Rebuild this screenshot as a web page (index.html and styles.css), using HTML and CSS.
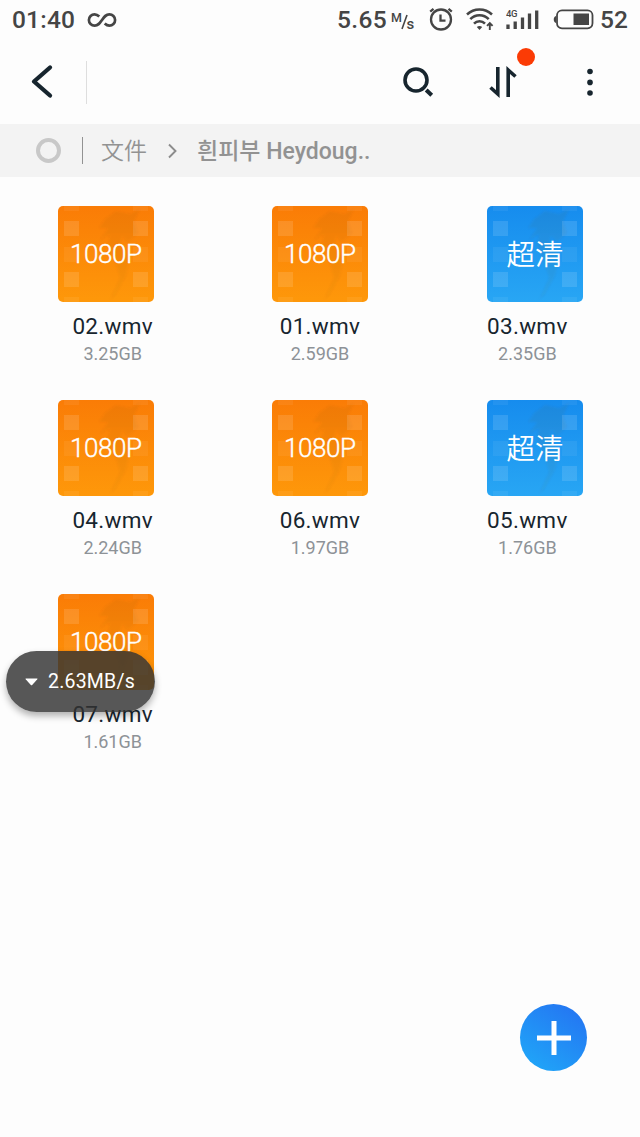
FILE: index.html
```html
<!DOCTYPE html>
<html lang="zh">
<head>
<meta charset="utf-8">
<title>文件</title>
<link rel="stylesheet" href="styles.css">
</head>
<body>
<svg class="defs" width="0" height="0" aria-hidden="true">
  <defs>
    <linearGradient id="orange" x1="0" y1="0" x2="0" y2="1"><stop offset="0" stop-color="#fa7c06"/><stop offset="1" stop-color="#fe980a"/></linearGradient>
    <linearGradient id="blue" x1="0" y1="0" x2="0" y2="1"><stop offset="0" stop-color="#168cee"/><stop offset="1" stop-color="#28a6f4"/></linearGradient>
    <linearGradient id="fade" x1="0" y1="0" x2="0" y2="1"><stop offset="0" stop-color="#70451c" stop-opacity=".07"/><stop offset="1" stop-color="#70451c" stop-opacity=".05"/></linearGradient>
    <filter id="soft"><feGaussianBlur stdDeviation="1"/></filter>
    <symbol id="film" viewBox="0 0 96 96">
      <path d="M41 22 47 13 58 5 72 8 82 3 76 16 80 27 70 36 64 30 62 38 72 50 68 70 58 88 52 94 62 72 56 52 50 40 52 28 42 34 50 22Z" fill="url(#fade)" filter="url(#soft)"/>
      <g fill="#fff">
        <path fill-opacity=".06" d="M6 0h15v5H6zM6 41h15v15H6zM6 91h15v5H6zM75 0h15v5H75zM75 41h15v15H75zM75 91h15v5H75z"/>
        <path fill-opacity=".12" d="M6 15h15v15H6zM6 66h15v15H6zM75 15h15v15H75zM75 66h15v15H75z"/>
      </g>
    </symbol>
    <symbol id="hd" viewBox="0 0 96 96">
      <rect width="96" height="96" rx="5" fill="url(#orange)"/>
      <use href="#film"/>
      <text class="hd-text" x="12" y="57" textLength="72">1080P</text>
    </symbol>
    <symbol id="sd" viewBox="0 0 96 96">
      <rect width="96" height="96" rx="5" fill="url(#blue)"/>
      <use href="#film"/>
      <text class="sd-text" x="48" y="59" text-anchor="middle">超清</text>
    </symbol>
  </defs>
</svg>

<header class="status">
  <span class="clock">01:40</span>
  <svg class="infinity" width="30" height="18" viewBox="0 0 30 18"><path d="M12.300 5.500C10.500 3.800 9.300 3.300 7.600 3.300a5.700 5.700 0 0 0 0 11.400c3.600 0 5-2.200 7.400-5.700s3.800-5.700 7.400-5.700a5.700 5.700 0 0 1 0 11.400c-1.700 0-2.900-.5-4.700-2.200" fill="none" stroke="#454545" stroke-width="2.700"/></svg>
  <span class="speed">5.65</span>
  <svg class="unit" width="26" height="32" viewBox="0 -4 26 32"><text x="0" y="14" class="unit-m">M</text><path d="M16 7 11 21" stroke="#454545" stroke-width="1.600"/><text x="15.500" y="21" class="unit-s">s</text></svg>
  <svg class="alarm" width="24" height="24" viewBox="0 0 24 24" fill="none" stroke="#454545" stroke-width="2.300"><circle cx="12" cy="11.500" r="10"/><path d="M11.500 6.500v6.200h5M1.200 3.700 4.500.9M22.800 3.700 19.500.9"/></svg>
  <svg class="wifi" width="28" height="24" viewBox="0 0 28 24" fill="none" stroke="#454545" stroke-width="2.500"><path d="M1 6.500a18 18 0 0 1 25 0M4.300 11.200a12.500 12.500 0 0 1 18.400 0M8 15.700a7.500 7.500 0 0 1 11 0"/><path d="m10.800 19 2.700 3 2.700-3c-1.600-1.200-3.800-1.200-5.400 0Z" fill="#454545" stroke="none"/><path d="M23.800 22v-6M21 17.900l2.800-2.800 2.800 2.800" stroke-width="1.900"/></svg>
  <svg class="signal" width="34" height="24" viewBox="0 0 34 24"><text x="0" y="8.500" class="net" textLength="11.500">4G</text><path d="M2 16.500V21M9.200 13.500V21M16.500 9.500V21M23.500 5.500V21M30.700 2.500V21" stroke="#454545" stroke-width="3.300"/></svg>
  <svg class="battery" width="42" height="22" viewBox="0 0 42 22"><rect x="4" y="1.300" width="35.500" height="18" rx="5" fill="none" stroke="#454545" stroke-width="1.800"/><path d="M3 7C0 7.500 0 13.500 3 14Z" fill="#454545"/><path d="M20.500 4.500H36V16H20.500z" fill="#454545"/></svg>
  <span class="percent">52</span>
</header>

<nav class="toolbar">
  <svg class="back" width="24" height="36" viewBox="0 0 24 36"><path d="M20 3.500 4 17.500l16 14" fill="none" stroke="#17252e" stroke-width="4.300" stroke-linecap="round" stroke-linejoin="round"/></svg>
  <span class="divider"></span>
  <svg class="search" width="32" height="32" viewBox="0 0 32 32" fill="none" stroke="#17252e" stroke-width="3.600"><circle cx="14" cy="14" r="11"/><path d="m24.200 24 5.500 5.300" stroke-width="4"/></svg>
  <span class="sort">
    <svg width="28" height="32" viewBox="0 0 28 32" fill="none" stroke="#17252e" stroke-width="3.600"><path d="M8.800 1v27L1.500 21.500M19.200 31V4l7.300 6.500"/></svg>
    <i class="dot"></i>
  </span>
  <svg class="more" width="6" height="28" viewBox="0 0 6 28" fill="#17252e"><circle cx="3" cy="3.500" r="2.800"/><circle cx="3" cy="14.400" r="2.800"/><circle cx="3" cy="25" r="2.800"/></svg>
</nav>

<div class="crumbs">
  <span class="ring"></span>
  <span class="bar"></span>
  <span class="root">文件</span>
  <svg class="chev" width="10" height="16" viewBox="0 0 10 16"><path d="m1 1.500 6.500 6.500L1 14.500" fill="none" stroke="#8c8c8c" stroke-width="1.900"/></svg>
  <span class="folder">흰피부 Heydoug..</span>
</div>

<main class="files">
  <article class="file left"><svg class="thumb"><use href="#hd"/></svg><span class="name">02.wmv</span><span class="size">3.25GB</span></article>
  <article class="file"><svg class="thumb"><use href="#hd"/></svg><span class="name">01.wmv</span><span class="size">2.59GB</span></article>
  <article class="file right"><svg class="thumb"><use href="#sd"/></svg><span class="name">03.wmv</span><span class="size">2.35GB</span></article>
  <article class="file left"><svg class="thumb"><use href="#hd"/></svg><span class="name">04.wmv</span><span class="size">2.24GB</span></article>
  <article class="file"><svg class="thumb"><use href="#hd"/></svg><span class="name">06.wmv</span><span class="size">1.97GB</span></article>
  <article class="file right"><svg class="thumb"><use href="#sd"/></svg><span class="name">05.wmv</span><span class="size">1.76GB</span></article>
  <article class="file left"><svg class="thumb"><use href="#hd"/></svg><span class="name">07.wmv</span><span class="size">1.61GB</span></article>
</main>

<div class="rate"><svg width="13" height="8" viewBox="0 0 13 8"><path d="M1 .5h11q1 0 .3.800L7.200 6.900q-.7.700-1.400 0L.7 1.300Q0 .5 1 .5Z" fill="#fff"/></svg><span>2.63MB/s</span></div>
<button class="add" aria-label="add"><svg width="34" height="34" viewBox="0 0 34 34"><path d="M17 0v34M0 17h34" stroke="#fff" stroke-width="5"/></svg></button>
</body>
</html>
```
FILE: styles.css
```css
* { box-sizing: border-box; }
body { margin: 0; width: 640px; height: 1137px; overflow: hidden; background: #fdfdfd; font-family: Roboto, "Noto Sans CJK SC", sans-serif; }
svg { display: block; flex: none; }
.defs { position: absolute; }
.status { display: flex; align-items: center; height: 40px; padding-left: 12px; color: #454545; font-size: 24.500px; font-weight: 500; line-height: 40px; white-space: nowrap; }
.clock { width: 75px; letter-spacing: .2px; }
.infinity { margin-right: 220px; }
.speed { width: 54px; letter-spacing: .4px; }
.unit-m { font-size: 12.500px; font-weight: 500; fill: #454545; }
.unit-s { font-size: 15px; font-weight: 500; fill: #454545; }
.alarm { margin: 0 13px 0 12px; }
.wifi { margin-right: 12px; }
.signal { margin-right: 13px; }
.net { font-size: 9.500px; font-weight: 500; fill: #454545; }
.battery { margin-right: 5px; }
.toolbar { display: flex; align-items: center; height: 84px; padding-left: 30px; }
.back { margin-right: 32px; }
.divider { width: 1px; height: 43px; margin-right: 315px; background: #dedede; }
.search { margin-right: 55px; }
.sort { position: relative; margin-right: 70px; }
.dot { position: absolute; left: 28px; top: -18px; width: 18px; height: 18px; border-radius: 50%; background: #fb3b05; }
.crumbs { display: flex; align-items: center; height: 53px; padding-left: 36px; background: #f3f3f3; color: #929292; white-space: nowrap; }
.ring { width: 25px; height: 25px; border: 4px solid #c8c8c8; border-radius: 50%; margin-right: 21px; }
.bar { width: 1px; height: 27px; background: #929292; margin-right: 18px; }
.root { width: 67px; padding-bottom: 3px; font-family: "Noto Sans CJK SC", sans-serif; font-size: 23px; font-weight: 350; line-height: 50px; }
.chev { margin-right: 19px; }
.folder { padding-top: 3px; font-family: Roboto, "Noto Sans CJK KR", sans-serif; font-size: 23px; font-weight: 500; line-height: 50px; }
.files { display: grid; grid-template-columns: repeat(3, 1fr); grid-auto-rows: 194.200px; padding: 29px 9px 0; }
.file { display: flex; flex-direction: column; align-items: center; }
.thumb { width: 96px; height: 96px; }
.left .thumb { margin-left: -13px; }
.right .thumb { margin-left: 15px; }
.hd-text { font-family: Roboto, sans-serif; font-size: 26px; font-weight: 300; fill: #fff; stroke: #fff; stroke-width: .4px; }
.sd-text { font-family: "Noto Sans CJK SC", sans-serif; font-size: 28.500px; font-weight: 350; fill: #fff; }
.name { margin-top: 9px; color: #17252e; font-size: 22.500px; font-weight: 400; line-height: 30px; letter-spacing: .3px; }
.size { margin-top: 2px; color: #8d9297; font-size: 18px; font-weight: 400; line-height: 22px; }
.rate { position: absolute; left: 6px; top: 651px; display: flex; align-items: center; gap: 10px; width: 149px; height: 61px; padding-left: 19px; border-radius: 31px; background: rgba(50, 50, 50, .82); color: #fff; font-size: 19.500px; letter-spacing: .2px; box-shadow: 0 4px 7px rgba(0, 0, 0, .3); }
.add { position: absolute; left: 520px; top: 1004px; display: grid; place-items: center; width: 67px; height: 67px; padding: 0; border: 0; border-radius: 50%; background: linear-gradient(215deg, #2476f2 10%, #20a5f8 90%); }
```
